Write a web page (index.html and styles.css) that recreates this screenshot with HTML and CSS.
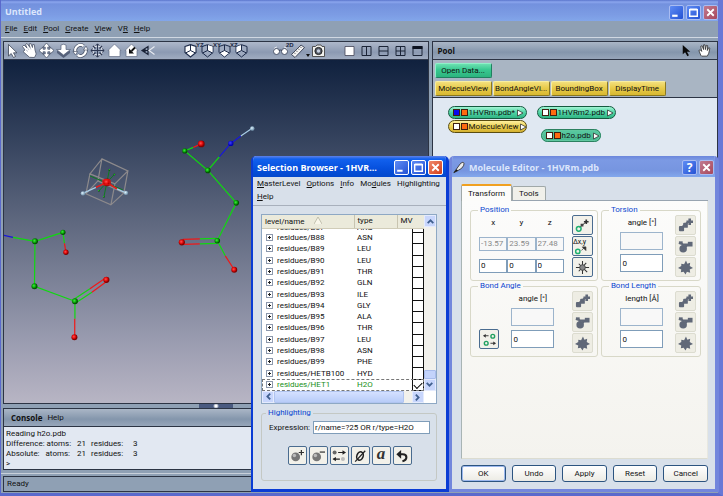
FILE: index.html
```
<!DOCTYPE html>
<html lang="en">
<head>
<meta charset="utf-8">
<title>Untitled</title>
<link rel="stylesheet" href="styles.css">
</head>
<body>
<svg class="sprites" aria-hidden="true">
  <symbol id="i-addatom" viewBox="0 0 16 16"><path d="M3 11l8-7" stroke="currentColor" stroke-width="2"/><rect x="1" y="8.500" width="5.500" height="5.500" rx="1" fill="currentColor"/><rect x="5.500" y="5" width="5" height="5.500" rx="1" fill="currentColor"/><path d="M12.500 .5v7M9 4h7" stroke="currentColor" stroke-width="2.800"/></symbol>
  <symbol id="i-branch" viewBox="0 0 16 16"><circle cx="5.500" cy="10.500" r="4" fill="currentColor"/><path d="M5 10L13 5M1 4l5 2M4 6h8" stroke="currentColor" stroke-width="2.200"/><rect x="10.500" y="3" width="5" height="5" fill="currentColor"/><rect x="1" y="2.500" width="4" height="3" fill="currentColor"/></symbol>
  <symbol id="i-star" viewBox="0 0 16 16"><path d="M8.500 .5l1.500 3.500L13 3l-.5 3.500 3.500 2-3.500 1.500.5 3.500-3.500-1L8 15.500 6 12.500 3 13l.5-3L0 8.500l3.500-2L3.500 4l3 .5z" fill="currentColor"/></symbol>
  <symbol id="i-close" viewBox="0 0 12 12"><path d="M3 3l6 6M9 3l-6 6" stroke="#fff" stroke-width="1.700"/></symbol>
  <symbol id="i-max" viewBox="0 0 12 12"><path d="M2.500 3.500h7v6h-7zM2.500 3h7" fill="none" stroke="#fff" stroke-width="1.300"/></symbol>
  <symbol id="i-min" viewBox="0 0 12 12"><path d="M2 9h5" stroke="#fff" stroke-width="2"/></symbol>
  <symbol id="i-chevron" viewBox="0 0 8 8"><path d="M1.500 5.500L4 3l2.500 2.500" fill="none" stroke="#41608f" stroke-width="1.600"/></symbol>
  <symbol id="i-port" viewBox="0 0 8 8"><path d="M1.500 1L7 4 1.500 7z" fill="#fff" stroke="#333" stroke-width=".8"/></symbol>
</svg>

<div class="app">
  <header class="titlebar main-title">
    <h1>Untitled</h1>
    <div class="winbtns">
      <button type="button" aria-label="Minimize"><svg><use href="#i-min"/></svg></button>
      <button type="button" aria-label="Maximize"><svg><use href="#i-max"/></svg></button>
      <button type="button" class="close" aria-label="Close"><svg><use href="#i-close"/></svg></button>
    </div>
  </header>
  <nav class="menubar">
    <a href="#"><u>F</u>ile</a><a href="#"><u>E</u>dit</a><a href="#"><u>P</u>ool</a><a href="#"><u>C</u>reate</a><a href="#"><u>V</u>iew</a><a href="#">V<u>R</u></a><a href="#"><u>H</u>elp</a>
  </nav>

  <div class="workspace">
    <main class="left">
      <section class="viewer">
        <div class="toolbar">
          <div class="group">
            <button type="button" aria-label="Interact"><svg viewBox="0 0 17 17"><path d="M4.500 2.500v11.500l2.700-2.500L9.500 15.500l2-1-2-3.700H13z" fill="#fff" stroke="#3c4454" stroke-width=".8"/></svg></button>
            <button type="button" aria-label="Trackball"><svg viewBox="0 0 17 17"><path d="M1.500 4.500L3 3l3 3L4.500 2.500 6 1.500 9 5.500 8 2l1.800-.5 1.700 4 .2-3 1.600.1L14 8l1.200 4-1.700 3.500-5-.2L2 9.500 4 8z" fill="#fff" stroke="#4b5468" stroke-width=".8"/><path d="M6.500 6l1.500 2M9 5.500l1 2M5 8l2 1.500" stroke="#98a0b0" stroke-width=".6"/></svg></button>
            <button type="button" aria-label="Translate"><svg viewBox="0 0 17 17"><path d="M8.500 1L12 5H9.800v2.200H12V5l4 3.500-4 3.500V9.800H9.800V12H12l-3.500 4L5 12h2.200V9.800H5V12L1 8.500 5 5v2.200h2.200V5H5z" fill="#fff" stroke="#3c465c" stroke-width=".7"/></svg></button>
            <button type="button" aria-label="Zoom"><svg viewBox="0 0 17 17"><path d="M2 8.500v2.500l6.500 5 6.500-5V8.500z" fill="#56617a"/><path d="M6 3q2.500-1.500 5 0v4.500h4.500L8.500 13 1.500 7.500H6z" fill="#fff" stroke="#56617a" stroke-width=".7"/></svg></button>
            <button type="button" aria-label="Rotate"><svg viewBox="0 0 17 17"><path d="M3.500 10a5.300 5.300 0 0 1 8-6M13.500 7a5.300 5.300 0 0 1-8 6" fill="none" stroke="#3e475c" stroke-width="3.600"/><path d="M3.500 10a5.300 5.300 0 0 1 8-6M13.500 7a5.300 5.300 0 0 1-8 6" fill="none" stroke="#fff" stroke-width="2.200"/><path d="M11.500 8h4.500L14 4zM1 9.500h4.500L3.500 13z" fill="#fff" stroke="#3e475c" stroke-width=".6"/></svg></button>
            <button type="button" aria-label="Seek"><svg viewBox="0 0 17 17"><circle cx="8.500" cy="8.500" r="4.800" fill="none" stroke="#e8ebf1" stroke-width="1.400"/><path d="M8.500 2v13M2 8.500h13M6.500 4l2-2.200 2 2.200M6.500 13l2 2.200 2-2.200M4 6.500L1.800 8.500 4 10.500M13 6.500l2.200 2-2.200 2" fill="none" stroke="#2c3650" stroke-width="1"/><path d="M4 4l2.500 2.500M13 4l-2.500 2.500M4 13l2.500-2.500M13 13l-2.500-2.500" stroke="#2c3650" stroke-width="1.300"/></svg></button>
            <button type="button" aria-label="Home"><svg viewBox="0 0 17 17"><path d="M8.500 2l6.500 6.500h-1V14.500H3V8.500H2z" fill="#fff" stroke="#667086" stroke-width=".7"/></svg></button>
            <button type="button" aria-label="Set home"><svg viewBox="0 0 17 17"><path d="M8.500 2l6.500 6.500h-1V14.500H3V8.500H2z" fill="#fff" stroke="#667086" stroke-width=".7"/><path d="M12 5.500L8.500 9" stroke="#111" stroke-width="1.800"/><path d="M6 6.500v5h5z" fill="#111"/></svg></button>
            <button type="button" aria-label="Perspective"><svg viewBox="0 0 17 17"><path d="M2 8.500L8 4.500v8zM2 8.500h6M5 6.500v4" fill="none" stroke="#1a2236" stroke-width="1.200"/><path d="M14.500 4.500l-5.500 4 5.500 4" fill="none" stroke="#e8ebf1" stroke-width="1.100"/></svg></button>
          </div>
          <div class="group axes">
            <button type="button" aria-label="View all"><svg viewBox="0 0 17 17"><path d="M3 4.500l5.500-1.800L14 4.500v6L8.500 15 3 10.500z" fill="#fff" stroke="#1c2a48" stroke-width="1.100"/><path d="M8.500 3v5.500L3.500 11M8.500 8.500l5 2.500" fill="none" stroke="#1c2a48" stroke-width="1"/></svg></button>
            <button type="button" aria-label="View YZ"><span>YZ</span><svg viewBox="0 0 17 17"><path d="M3 4.500l5.500-1.800L14 4.500v6L8.500 15 3 10.500z" fill="#9fabc0" stroke="#1c2a48"/><path d="M8.500 3v5.500l5 2V4.500z" fill="#fff"/><path d="M8.500 3v5.500L3.500 11M8.500 8.500l5 2.500" fill="none" stroke="#1c2a48"/></svg></button>
            <button type="button" aria-label="View XY"><span>XY</span><svg viewBox="0 0 17 17"><path d="M3 4.500l5.500-1.800L14 4.500v6L8.500 15 3 10.500z" fill="#9fabc0" stroke="#1c2a48"/><path d="M8.500 8.500l5 2-5 4-5-4z" fill="#fff"/><path d="M8.500 3v5.500L3.500 11M8.500 8.500l5 2.500" fill="none" stroke="#1c2a48"/></svg></button>
            <button type="button" aria-label="View XZ"><span>XZ</span><svg viewBox="0 0 17 17"><path d="M3 4.500l5.500-1.800L14 4.500v6L8.500 15 3 10.500z" fill="#9fabc0" stroke="#1c2a48"/><path d="M8.500 3v5.500l-5 2V4.500z" fill="#fff"/><path d="M8.500 3v5.500L3.500 11M8.500 8.500l5 2.500" fill="none" stroke="#1c2a48"/></svg></button>
          </div>
          <div class="group tools">
            <button type="button" aria-label="Stereo"><svg viewBox="0 0 17 17"><path d="M2 8Q2 5 5 5M15 8q0-3-3-3" fill="none" stroke="#e4e8ef"/><circle cx="4.500" cy="9.500" r="3" fill="#fff" stroke="#3b455c" stroke-width=".9"/><circle cx="12.500" cy="9.500" r="3" fill="#fff" stroke="#3b455c" stroke-width=".9"/><path d="M7 8.500q1.500-1 3 0" fill="none" stroke="#3b455c"/></svg></button>
            <button type="button" aria-label="Measure"><span>2D</span><svg viewBox="0 0 17 17"><path d="M2.500 12.500L12 3l3.500 2.500-9.500 10z" fill="#f1f1f1" stroke="#333c50" stroke-width=".9"/><path d="M5 10.500l1.500 1.500M7 8.500l1.500 1.500M9 6.500l1.500 1.500M11 4.500l1.500 1.500" stroke="#555" stroke-width=".8"/></svg></button>
            <i class="caret"></i>
            <button type="button" aria-label="Snapshot"><svg viewBox="0 0 17 17"><path d="M2.500 4.500h3L7 3h4l1 1.500h2.500v10h-12z" fill="#f2f2ee" stroke="#444" stroke-width=".9"/><circle cx="8.500" cy="9" r="3.600" fill="#555c68" stroke="#222"/><circle cx="8.500" cy="9" r="1.700" fill="#c9d2e0"/></svg></button>
          </div>
          <div class="group">
            <button type="button" aria-label="Single view"><svg viewBox="0 0 17 17"><path d="M4 4.500h9v9H4z" fill="#fff" stroke="#445" stroke-width=".8"/></svg></button>
            <button type="button" aria-label="Two columns"><svg viewBox="0 0 17 17"><path d="M4 4.500h9v9H4zM8.500 4.500v9" fill="none" stroke="#1b2437"/></svg></button>
            <button type="button" aria-label="Two rows"><svg viewBox="0 0 17 17"><path d="M4 4.500h9v9H4zM4 9h9" fill="none" stroke="#1b2437"/></svg></button>
            <button type="button" aria-label="Four views"><svg viewBox="0 0 17 17"><path d="M4 4.500h9v9H4zM4 9h9M8.500 4.500v9" fill="none" stroke="#1b2437"/></svg></button>
            <button type="button" aria-label="Full screen"><svg viewBox="0 0 17 17"><path d="M4 4.500h9v9H4z" fill="none" stroke="#1b2437"/><path d="M3.500 4h10v3h-10z" fill="#0c1220"/></svg></button>
          </div>
        </div>
        <svg class="scene" viewBox="4 60 424 344" preserveAspectRatio="xMinYMin slice" role="img" aria-label="Molecules">
          <defs>
            <radialGradient id="g" cx=".4" cy=".4"><stop offset="0" stop-color="#40e840"/><stop offset=".6" stop-color="#08a808"/><stop offset="1" stop-color="#045004"/></radialGradient>
            <radialGradient id="r" cx=".4" cy=".4"><stop offset="0" stop-color="#ff5050"/><stop offset=".6" stop-color="#e00808"/><stop offset="1" stop-color="#800000"/></radialGradient>
            <radialGradient id="b" cx=".4" cy=".4"><stop offset="0" stop-color="#4040ff"/><stop offset="1" stop-color="#0000b0"/></radialGradient>
            <radialGradient id="w" cx=".4" cy=".4"><stop offset="0" stop-color="#e0f4ff"/><stop offset="1" stop-color="#7c9cb4"/></radialGradient>
          </defs>
          <g fill="none" stroke-width="1.200">
            <path stroke="#8d8a8c" d="M102 159l26 12-13 13-25-10zM98 181l26 12-13 12-25-11zM102 159l-4 22M128 171l-4 22M115 184l-4 21M90 174l-4 20"/>
            <path stroke="#0f7a20" stroke-width="1" d="M109.500 170L104 197M114.500 174.500L99 191M90 176l33 14"/>
            <path stroke="#a9cde6" d="M83 193.500l13-6M126 193l-9-4M252 128.500L241 136"/>
            <path stroke="#f01818" stroke-width="1.600" d="M96 187.500l11-5 10 6.500"/>
            <path stroke="#1818d8" d="M241 136l-10 7.500-11.500 13.500M4 235.500l9 2"/>
            <path stroke="#10d810" d="M219.500 157L208 170.500 185 151l8.500-3.500M208 170.500L236.500 203l-19 38M217.500 238.500l-17.500.5M217.500 243.500l-17.500.5M217.500 241l8 15M13 237.500l22 4 28-9 1.500 11M35 241.500l-.5 45 40.500 15M74 299.500l16-10.500M76 303l16-10.500M75 301.500V319"/>
            <path stroke="#f01818" d="M193.500 147.500l8-3.500M200 239l-17 .5M200 244l-17 .5M225.500 256l9 14M64.500 243.500l1.500 9M90 289l16-11M92 292.500l15-11M74.800 319v18"/>
          </g>
          <g fill="url(#g)"><circle cx="185" cy="151" r="2.600"/><circle cx="208" cy="170.500" r="2.800"/><circle cx="236.500" cy="203" r="2.800"/><circle cx="217.500" cy="241" r="2.800"/><circle cx="35" cy="241.500" r="3"/><circle cx="63" cy="232.500" r="2.600"/><circle cx="34.500" cy="286.500" r="3"/><circle cx="75" cy="301.500" r="3"/><circle cx="114.500" cy="174.500" r=".9"/><circle cx="109.500" cy="170" r=".9"/><circle cx="104" cy="197" r=".9"/><circle cx="99" cy="191" r=".9"/></g>
          <g fill="url(#r)"><circle cx="201.500" cy="144" r="3.400"/><circle cx="182" cy="242.500" r="3.100"/><circle cx="234.500" cy="270" r="3"/><circle cx="66" cy="252.500" r="2.700"/><circle cx="106.500" cy="280" r="3.100"/><circle cx="74.500" cy="337.500" r="3"/><circle cx="107" cy="182.500" r="3.800"/></g>
          <path d="M103 180h7v5h-7z" fill="none" stroke="#f01818"/>
          <circle cx="231" cy="143.500" r="2.700" fill="url(#b)"/>
          <g fill="url(#w)"><circle cx="83" cy="193.500" r="2.200"/><circle cx="126" cy="193" r="2.200"/><circle cx="252.500" cy="128.500" r="2.200"/></g>
        </svg>
      </section>
      <div class="hsplit"><i></i></div>
      <section class="console">
        <div class="panelhead"><h2>Console</h2><a href="#">Help</a></div>
        <div class="log">
          <p>Reading h2o.pdb</p>
          <dl><dt>Difference: atoms:</dt><dd>21</dd><dt>residues:</dt><dd>3</dd></dl>
          <dl><dt>Absolute: &nbsp; atoms:</dt><dd>21</dd><dt>residues:</dt><dd>3</dd></dl>
          <p>&gt;</p>
        </div>
      </section>
    </main>

    <aside class="pool">
      <div class="panelhead"><h2>Pool</h2>
        <div class="poolicons">
          <svg viewBox="0 0 14 16"><path d="M3 2v10l2.500-2.200L8 14l1.600-1-2.200-3.800H11z" fill="#0a0a0a"/></svg>
          <svg viewBox="0 0 14 16"><path d="M3 13L1 8l1.500-.7L4 9 3 3.500l1.400-.5L6 7V2h1.500L8 7l1-4.500 1.400.3L10 8l1.500-3 1.200.6L11.500 11 10 14H4z" fill="#fff" stroke="#222" stroke-width=".8"/></svg>
        </div>
      </div>
      <div class="actions">
        <div><button type="button" class="green">Open Data...</button></div>
        <div><button type="button">MoleculeView</button><button type="button">BondAngleVi...</button><button type="button">BoundingBox</button><button type="button">DisplayTime</button></div>
      </div>
      <div class="canvas">
        <div class="stack">
          <button type="button" class="node green"><i class="blue"></i><i></i><span>1HVRm.pdb*</span><svg><use href="#i-port"/></svg></button>
          <button type="button" class="node"><i class="white"></i><i></i><span>MoleculeView</span><svg><use href="#i-port"/></svg></button>
        </div>
        <div class="stack second">
          <button type="button" class="node green"><i class="white"></i><i></i><span>1HVRm2.pdb</span><svg><use href="#i-port"/></svg></button>
          <button type="button" class="node green selected"><i class="white"></i><i></i><span>h2o.pdb</span><svg><use href="#i-port"/></svg></button>
        </div>
      </div>
    </aside>
  </div>
  <footer class="status">Ready</footer>
</div>

<section class="dialog browser">
  <header class="titlebar">
    <h2>Selection Browser - 1HVR...</h2>
    <div class="winbtns">
      <button type="button" aria-label="Minimize"><svg><use href="#i-min"/></svg></button>
      <button type="button" aria-label="Maximize"><svg><use href="#i-max"/></svg></button>
      <button type="button" class="close" aria-label="Close"><svg><use href="#i-close"/></svg></button>
    </div>
  </header>
  <nav class="submenu">
    <a href="#"><u>M</u>asterLevel</a><a href="#"><u>O</u>ptions</a><a href="#"><u>I</u>nfo</a><a href="#">Mo<u>d</u>ules</a><a href="#">Hi<u>g</u>hlighting</a><a href="#"><u>H</u>elp</a>
  </nav>
  <div class="treebox">
    <div class="treemain">
      <table>
        <thead><tr><th>level/name <svg viewBox="0 0 8 8"><path d="M0 8l4-7 4 7" fill="#f8f6ea" stroke="#b5b29f" stroke-width=".8"/></svg></th><th>type</th><th colspan="2">MV</th></tr></thead>
        <tbody>
          <tr class="cut"><td><div>residues/B87</div></td><td><div>ARG</div></td><td></td><td class="mv"></td></tr>
          <tr><td><b></b>residues/B88</td><td>ASN</td><td></td><td class="mv"><input type="checkbox" aria-label="B88"></td></tr>
          <tr><td><b></b>residues/B89</td><td>LEU</td><td></td><td class="mv"><input type="checkbox" aria-label="B89"></td></tr>
          <tr><td><b></b>residues/B90</td><td>LEU</td><td></td><td class="mv"><input type="checkbox" aria-label="B90"></td></tr>
          <tr><td><b></b>residues/B91</td><td>THR</td><td></td><td class="mv"><input type="checkbox" aria-label="B91"></td></tr>
          <tr><td><b></b>residues/B92</td><td>GLN</td><td></td><td class="mv"><input type="checkbox" aria-label="B92"></td></tr>
          <tr><td><b></b>residues/B93</td><td>ILE</td><td></td><td class="mv"><input type="checkbox" aria-label="B93"></td></tr>
          <tr><td><b></b>residues/B94</td><td>GLY</td><td></td><td class="mv"><input type="checkbox" aria-label="B94"></td></tr>
          <tr><td><b></b>residues/B95</td><td>ALA</td><td></td><td class="mv"><input type="checkbox" aria-label="B95"></td></tr>
          <tr><td><b></b>residues/B96</td><td>THR</td><td></td><td class="mv"><input type="checkbox" aria-label="B96"></td></tr>
          <tr><td><b></b>residues/B97</td><td>LEU</td><td></td><td class="mv"><input type="checkbox" aria-label="B97"></td></tr>
          <tr><td><b></b>residues/B98</td><td>ASN</td><td></td><td class="mv"><input type="checkbox" aria-label="B98"></td></tr>
          <tr><td><b></b>residues/B99</td><td>PHE</td><td></td><td class="mv"><input type="checkbox" aria-label="B99"></td></tr>
          <tr><td><b></b>residues/HETB100</td><td>HYD</td><td></td><td class="mv"><input type="checkbox" aria-label="HETB100"></td></tr>
          <tr class="current"><td><b></b>residues/HET1</td><td>H2O</td><td></td><td class="mv"><input type="checkbox" aria-label="HET1" checked></td></tr>
        </tbody>
      </table>
      <div class="vbar"><span class="arrow"><svg><use href="#i-chevron"/></svg></span><i></i><span class="arrow down"><svg><use href="#i-chevron"/></svg></span></div>
    </div>
    <div class="hbar"><span class="arrow lft"><svg><use href="#i-chevron"/></svg></span><i></i><span class="arrow rgt"><svg><use href="#i-chevron"/></svg></span></div>
  </div>
  <fieldset class="highlight">
    <legend>Highlighting</legend>
    <div class="expr"><label for="expr">Expression:</label><input id="expr" type="text" value="r/name=?25 OR r/type=H2O"></div>
    <div class="iconrow">
      <button type="button" aria-label="Add"><svg viewBox="0 0 16 16"><circle cx="6.500" cy="9" r="5" fill="#777"/><circle cx="5" cy="7.500" r="2" fill="#bbb"/><path d="M13 1v6M10 4h6" stroke="#333" stroke-width="1.400"/></svg></button>
      <button type="button" aria-label="Remove"><svg viewBox="0 0 16 16"><circle cx="6.500" cy="9" r="5" fill="#777"/><circle cx="5" cy="7.500" r="2" fill="#bbb"/><path d="M10 3.500h6" stroke="#333" stroke-width="1.400"/></svg></button>
      <button type="button" aria-label="Swap"><svg viewBox="0 0 16 16"><circle cx="3" cy="4" r="2.300" fill="#666"/><circle cx="12.500" cy="11.500" r="2.300" fill="#bbb"/><path d="M7 4h8M9 11.500H2" stroke="#222" stroke-width="1.300"/><path d="M12 1.500L16 4l-4 2.500zM4.500 9L.5 11.500l4 2.500z" fill="#222"/></svg></button>
      <button type="button" aria-label="Clear"><svg viewBox="0 0 16 16"><ellipse cx="8" cy="8" rx="3.600" ry="5" transform="rotate(20 8 8)" fill="none" stroke="#222" stroke-width="1.800"/><path d="M2.500 14.500L14 2" stroke="#222" stroke-width="1.400"/></svg></button>
      <button type="button" class="alpha" aria-label="All">a</button>
      <button type="button" aria-label="Undo"><svg viewBox="0 0 16 16"><path d="M4 6h5q4 0 4 3.500T8.500 14" fill="none" stroke="#222" stroke-width="2.400"/><path d="M7 1v10L1.500 6z" fill="#222"/></svg></button>
    </div>
  </fieldset>
</section>

<section class="dialog editor">
  <header class="titlebar">
    <svg class="appicon" viewBox="0 0 14 14"><path d="M1 13L9 2q3-2 4 0 0 3-3 6l-5 3z" fill="#ececec" stroke="#222" stroke-width=".9"/><path d="M1 13l3-4 2 1.500z" fill="#111"/></svg>
    <h2>Molecule Editor - 1HVRm.pdb</h2>
    <div class="winbtns">
      <button type="button" class="help" aria-label="Help">?</button>
      <button type="button" class="close" aria-label="Close"><svg><use href="#i-close"/></svg></button>
    </div>
  </header>
  <div class="tabs"><button type="button" class="active">Transform</button><button type="button">Tools</button></div>
  <div class="tabpanel">
    <fieldset>
      <legend>Position</legend>
      <div class="xyz">
        <label for="px">x</label><label for="py">y</label><label for="pz">z</label>
        <input type="text" value="-13.57" disabled aria-label="Current x"><input type="text" value="23.59" disabled aria-label="Current y"><input type="text" value="27.48" disabled aria-label="Current z">
        <input id="px" type="text" value="0"><input id="py" type="text" value="0"><input id="pz" type="text" value="0">
      </div>
      <div class="side">
        <button type="button" aria-label="Move atom"><svg viewBox="0 0 16 16"><path d="M5 10l7-6" stroke="#333"/><circle cx="4" cy="11.500" r="2.500" fill="none" stroke="#20b070" stroke-width="1.600"/><path d="M6 6h3v3H6z" fill="#444"/><path d="M12 1.500v5M9.500 4h5" stroke="#333" stroke-width="1.800"/></svg></button>
        <button type="button" aria-label="Move by offset" class="delta"><span>Δx,y</span><svg viewBox="0 0 16 10"><circle cx="5" cy="6" r="2.400" fill="none" stroke="#20b070" stroke-width="1.600"/><path d="M9 5l4-4M10 1h4v4z" stroke="#333" fill="#333" stroke-width=".8"/></svg></button>
        <button type="button" aria-label="Move molecule"><svg viewBox="0 0 16 16"><path d="M8 1v14M1 8h14M4 4l9 9M12 3l-8 9" stroke="#333" stroke-width="1.100"/><circle cx="8" cy="8" r="3" fill="#888" stroke="#444"/></svg></button>
      </div>
    </fieldset>
    <fieldset>
      <legend>Torsion</legend>
      <div class="value"><label for="tor">angle [°]</label><input type="text" disabled aria-label="Current torsion"><input id="tor" type="text" value="0"></div>
      <div class="side off"><button type="button" disabled aria-label="Rotate atom"><svg><use href="#i-addatom"/></svg></button><button type="button" disabled aria-label="Rotate branch"><svg><use href="#i-branch"/></svg></button><button type="button" disabled aria-label="Rotate molecule"><svg><use href="#i-star"/></svg></button></div>
    </fieldset>
    <fieldset>
      <legend>Bond Angle</legend>
      <button type="button" class="swap" aria-label="Swap ends"><svg viewBox="0 0 16 16"><path d="M3 4h4M9 12h4" stroke="#333"/><path d="M4 2L1 4l3 2zM12 10l3 2-3 2z" fill="#333"/><circle cx="11.500" cy="4.500" r="2" fill="none" stroke="#20a060" stroke-width="1.500"/><circle cx="4.500" cy="12" r="2" fill="none" stroke="#20a060" stroke-width="1.500"/></svg></button>
      <div class="value wide"><label for="bang">angle [°]</label><input type="text" disabled aria-label="Current angle"><input id="bang" type="text" value="0"></div>
      <div class="side off"><button type="button" disabled aria-label="Bend atom"><svg><use href="#i-addatom"/></svg></button><button type="button" disabled aria-label="Bend branch"><svg><use href="#i-branch"/></svg></button><button type="button" disabled aria-label="Bend molecule"><svg><use href="#i-star"/></svg></button></div>
    </fieldset>
    <fieldset>
      <legend>Bond Length</legend>
      <div class="value"><label for="blen">length [Å]</label><input type="text" disabled aria-label="Current length"><input id="blen" type="text" value="0"></div>
      <div class="side off"><button type="button" disabled aria-label="Stretch atom"><svg><use href="#i-addatom"/></svg></button><button type="button" disabled aria-label="Stretch branch"><svg><use href="#i-branch"/></svg></button><button type="button" disabled aria-label="Stretch molecule"><svg><use href="#i-star"/></svg></button></div>
    </fieldset>
  </div>
  <div class="buttons"><button type="button" class="default">OK</button><button type="button">Undo</button><button type="button">Apply</button><button type="button">Reset</button><button type="button">Cancel</button></div>
</section>
</body>
</html>
```
FILE: styles.css
```
* { box-sizing: border-box; }
body { margin: 0; font: 8px/10px Roboto, "Liberation Sans", sans-serif; color: #111; }
h1, h2, p, dl, dd { margin: 0; }
a { color: inherit; text-decoration: none; }
button, input { font: inherit; color: inherit; margin: 0; padding: 0; border: 0; background: none; }
fieldset { margin: 0; min-width: 0; }
svg { display: block; }
.sprites { position: absolute; width: 0; height: 0; }

.app { display: flex; flex-direction: column; height: 100vh; border: solid #5a69cc; border-width: 0 5px 3px 1px; border-right-color: #6878d6; background: #8fa0b4; }
.titlebar { display: flex; align-items: center; flex: none; height: 21px; padding: 0 4px; color: #fff; background: linear-gradient(#5f82e8 0, #1261ee 3px, #0650dd 60%, #0348cc); }
.titlebar h1, .titlebar h2 { flex: 1; font: bold 9px/14px "Open Sans", sans-serif; white-space: nowrap; }
.titlebar.main-title { background: linear-gradient(#5a75cc 0, #8ba6ee 2px, #7391de 4px, #7c9ce4 70%, #82a6ea); color: #dce6fc; padding: 3px 0 0 4px; }
.winbtns { display: flex; gap: 2px; }
.winbtns button { width: 15px; height: 15px; border: 1px solid #fff; border-radius: 2px; color: #fff; background: linear-gradient(135deg, #5f8cf4, #2452d4); }
.winbtns svg { width: 13px; height: 13px; }
.winbtns .close { background: linear-gradient(135deg, #f08a6c, #d23c18); }
.winbtns .help { font: bold 12px/13px "Open Sans", sans-serif; }
.main-title .winbtns button, .editor .winbtns button { border-color: #a9bcf2; }
.main-title .close, .editor .winbtns .close { background: linear-gradient(135deg, #c07a90, #a8485c); }

.menubar { display: flex; gap: 6px; height: 17px; padding: 3px 4px; border-bottom: 1px solid #d0d8e2; }

.workspace { flex: 1; min-height: 0; display: grid; grid-template-columns: minmax(0, 425fr) minmax(0, 286fr); gap: 3px; padding: 3px 0 3px 2px; border-bottom: 1px solid #c8d0da; }
.left { display: flex; flex-direction: column; min-height: 0; }
.viewer { flex: 1; min-height: 0; display: flex; flex-direction: column; border: 1px solid #2c3444; }
.toolbar { display: flex; flex: none; height: 18px; background: linear-gradient(#aeb8ca, #8c9ab2 60%, #a0acc0); border-bottom: 1px solid #30394c; }
.group { display: flex; align-items: center; }
.axes { margin-left: 25px; }
.tools { margin: 0 14px 0 22px; }
.toolbar button { position: relative; width: 17px; height: 17px; }
.toolbar button svg { width: 17px; height: 17px; }
.toolbar button span { position: absolute; left: -3px; top: 0; font: bold 6px/6px "Liberation Sans", sans-serif; color: #1a2640; }
.caret { align-self: flex-end; margin: 0 0 2px; border: solid transparent; border-width: 3px 2px 0; border-top-color: #111; }
.scene { flex: 1; width: 100%; min-height: 0; background: linear-gradient(#10213e, #33415c 22%, #606980 48%, #9a9cb0 82%, #b8b5c4); }
.hsplit { height: 4px; }
.hsplit i { display: block; width: 34px; height: 4px; margin-left: 196px; background: radial-gradient(circle at 50% 2px, #fff 1px, #4a5a80 3px); }
.console { border: 1px solid #2c3444; }
.panelhead { display: flex; align-items: center; gap: 5px; height: 18px; padding: 0 7px; background: linear-gradient(#aab6c6, #8496ac 60%, #97a6ba); border-bottom: 1px solid #2c3444; }
.panelhead h2 { font: bold 8px/10px "Open Sans", sans-serif; }
.log { display: flex; flex-direction: column; justify-content: flex-end; height: 42px; overflow: hidden; padding: 0 2px; background: #e2e8f2; }
.log p, .log dl { flex: none; white-space: nowrap; }
.log dl { display: grid; grid-template-columns: 71px 14px 42px 1fr; }
.status { height: 16px; margin: 2px 1px 1px 2px; padding: 2px 3px; border: 1px solid #2c3444; background: #8fa0b4; }

.pool { display: flex; flex-direction: column; min-width: 0; border: 1px solid #2c3444; }
.pool .panelhead { padding: 0 5px; justify-content: space-between; }
.poolicons { display: flex; gap: 3px; }
.poolicons svg { width: 15px; height: 15px; }
.actions { display: flex; flex-direction: column; gap: 3px; padding: 3px 2px 0; height: 38px; background: #a9b5c3; border-bottom: 1px solid #2c3444; }
.actions div { display: flex; gap: 1px; }
.actions button { width: 57px; height: 15px; border: 1px solid; border-color: #f8eea0 #8a7820 #8a7820 #f8eea0; border-radius: 2px; background: linear-gradient(#f3df7c, #e8cc4c 45%, #d8b830); }
.actions .green { border-color: #90f0c8 #208060 #208060 #90f0c8; background: linear-gradient(#6be0b0, #38c890 45%, #2cb47e); }
.canvas { flex: 1; display: flex; gap: 9px; padding: 8px 15px; background: #e0e8f2; }
.stack { display: flex; flex-direction: column; align-items: flex-start; gap: 1px; width: 80px; }
.stack.second { gap: 10px; }
.node { display: flex; align-items: center; gap: 1px; width: 79px; height: 13px; padding: 0 2px 0 4px; border: 1px solid #5a4c10; border-radius: 7px; background: linear-gradient(#fff0a0, #ecd050 50%, #d4b030); white-space: nowrap; }
.node.green { border-color: #145a40; background: linear-gradient(#a0f4d4, #50d4a4 50%, #30b484); }
.node.selected { width: 60px; margin-left: 4px; border: 2px solid #60c8a0; background: linear-gradient(#58c8a0, #48b890); padding: 0 1px 0 3px; outline: 1px solid #2c8060; outline-offset: -1px; }
.node i { flex: none; width: 7px; height: 7px; border: 1px solid #402010; background: #ff6a10; }
.node .blue { background: #0808f0; }
.node .white { background: #fff; }
.node span { flex: 1; text-align: left; }
.node svg { flex: none; width: 8px; height: 8px; }

.dialog { position: absolute; top: 156px; bottom: 4px; display: flex; flex-direction: column; background: #d8e0ea; border-radius: 5px 5px 0 0; overflow: hidden; }
.browser { left: 251px; width: 198px; border: solid #0a3cd4; border-width: 0 3px 3px 2px; }
.browser .titlebar { padding: 2px 3px 0 4px; }
.editor { left: 449px; right: 4px; border: solid #7286dc; border-width: 0 4px 3px 3px; }
.editor .titlebar { gap: 4px; padding: 2px 1px 0; color: #dce6fc; background: linear-gradient(#6b86dc, #7c9ae4 4px, #7695e0 70%, #83a8ec); }
.appicon { width: 12px; height: 13px; }
.submenu { display: flex; flex-wrap: wrap; gap: 3px 6px; padding: 2px 3px 3px 4px; border-bottom: 1px solid #a8b0bc; }
.submenu a { white-space: nowrap; }

.treebox { margin: 8px 9px 0 8px; border: 1px solid #8ea8c4; background: #fff; }
.treemain { display: flex; height: 176px; }
table { flex: 1; height: 176px; border-collapse: collapse; table-layout: fixed; }
th { height: 13px; padding: 0 0 0 3px; text-align: left; font-weight: normal; background: #ebeadb; border-bottom: 1px solid #d0ccb8; }
th + th { border-left: 1px solid #c8c4b0; }
th:nth-child(1) { width: 92px; }
th:nth-child(2) { width: 43px; }
th svg { display: inline-block; width: 8px; height: 8px; margin-left: 8px; }
td { padding: 0 0 0 3px; white-space: nowrap; overflow: hidden; line-height: 10px; }
td:first-child { padding-left: 4px; }
.cut td { height: 4px; }
.cut div { display: flex; align-items: flex-end; height: 4px; overflow: hidden; }
.cut td:first-child div { padding-left: 11px; }
td b { display: inline-block; width: 7px; height: 7px; margin: 1px 4px 0 0; vertical-align: -1px; border: 1px solid #8c98ac; background: linear-gradient(#222, #222) center / 3px 1px no-repeat, linear-gradient(#222, #222) center / 1px 3px no-repeat, #fff; }
td.mv { width: 11px; padding: 0; border: 1px solid #111; }
.mv input { display: block; width: 9px; height: 9px; appearance: none; background: #fff; }
.mv input:checked::before { content: ""; display: block; width: 7px; height: 4px; margin: 2px 1px; border: solid #000; border-width: 0 0 1px 1px; transform: rotate(-45deg); }
.current { color: #189018; outline: 1px dashed #777; outline-offset: -1px; }
.vbar { display: flex; flex-direction: column; width: 12px; background: #f2f1ec; }
.vbar i { flex: none; height: 9px; margin-top: auto; background: #c3d3fb; border: 1px solid #a8bcec; border-radius: 1px; }
.arrow { display: grid; place-items: center; flex: none; width: 12px; height: 12px; background: #c8d6fc; border: 1px solid #e4ebfe; border-radius: 1px; }
.arrow svg { width: 9px; height: 9px; }
.down { transform: rotate(180deg); }
.lft { transform: rotate(-90deg); }
.rgt { transform: rotate(90deg); }
.hbar { display: flex; margin-right: 12px; background: #f2f1ec; }
.hbar i { flex: 1; margin-right: 8px; background: linear-gradient(#d4e0ff, #b8ccf8); border: 1px solid #b0c4f0; border-radius: 1px; }

.highlight { margin: 4px 9px 0 8px; padding: 3px 6px 15px 7px; border: 1px solid #c4c8c4; border-radius: 3px; }
legend { margin-left: 3px; padding: 0 2px; line-height: 10px; color: #0a46d0; }
.highlight legend { margin-left: -3px; }
.expr { display: flex; align-items: center; gap: 3px; }
.expr input, .tabpanel input { border: 1px solid #7f9db9; background: #fff; }
.expr input { flex: 1; min-width: 0; height: 13px; padding: 0 1px; }
.iconrow { display: flex; justify-content: center; gap: 2px; margin-top: 12px; }
.iconrow button, .side button, .swap { display: grid; place-items: center; width: 19px; height: 19px; border: 1px solid #4a6c90; border-radius: 2px; background: #f2f1ea; }
.iconrow svg { width: 14px; height: 14px; }
.iconrow .alpha { font: italic bold 17px/10px "Liberation Serif", serif; padding-bottom: 3px; color: #333; }

.tabs { display: flex; align-items: flex-end; margin: 7px 7px 0 9px; border-bottom: 1px solid #98a4b0; }
.tabs button { height: 14px; padding: 0 6px; border: 1px solid #a0a8a8; border-bottom: 0; border-radius: 2px 2px 0 0; background: #f0f0ea; }
.tabs .active { height: 17px; border-top: 2px solid #f0a020; margin-bottom: -1px; background: #fcfcfa; }
.tabpanel { flex: 1; min-height: 0; display: grid; grid-template-columns: 129fr 101fr; grid-template-rows: 76px 76px; column-gap: 3px; margin: 0 7px 0 9px; padding: 4px 6px 0 8px; border: solid #a8b4b4; border-width: 0 1px 1px; border-right-color: #e8e8e0; border-bottom-color: #dcdcd0; background: linear-gradient(#fcfcfb, #f4f3ee); }
.tabpanel fieldset { display: flex; justify-content: flex-end; padding: 0 4px; border: 1px solid #d8d8c8; border-radius: 3px; }
.xyz { flex: 1; display: grid; grid-template-columns: repeat(3, 1fr); grid-template-rows: 12px 14px 14px; row-gap: 8px; margin: 0 8px 0 4px; padding-top: 2px; }
.xyz label { align-self: center; text-align: center; }
.xyz input { min-width: 0; width: 100%; padding: 0 1px; }
.tabpanel input:disabled { color: #888; border-color: #9cb4cc; background: #f8f8f8; }
.value { display: flex; flex-direction: column; align-items: center; gap: 4px; width: 44px; margin-right: 11px; padding-top: 3px; }
.value.wide { margin-right: 17px; }
.value label { line-height: 10px; white-space: nowrap; }
.value input { width: 43px; height: 18px; padding: 0 1px; }
.side { display: flex; flex-direction: column; gap: 1px; }
.side button { width: 21px; height: 20px; }
.side svg, .swap svg { width: 15px; height: 15px; }
.side .delta { align-content: center; justify-items: start; font: 7px/8px Roboto, sans-serif; }
.side .delta svg { height: 9px; }
.side.off button { color: #606878; border-color: #dcdcd0; background: #eeede4; }
.swap { align-self: flex-end; width: 20px; height: 20px; margin: 0 auto 7px 4px; }
.buttons { display: flex; gap: 6px; padding: 6px 7px 7px 9px; }
.buttons button { flex: 1; height: 17px; border: 1px solid #2c5480; border-radius: 3px; background: linear-gradient(#fff, #ecebe4); }
.buttons .default { box-shadow: inset 0 0 0 1px #9cb8ee; }
```
